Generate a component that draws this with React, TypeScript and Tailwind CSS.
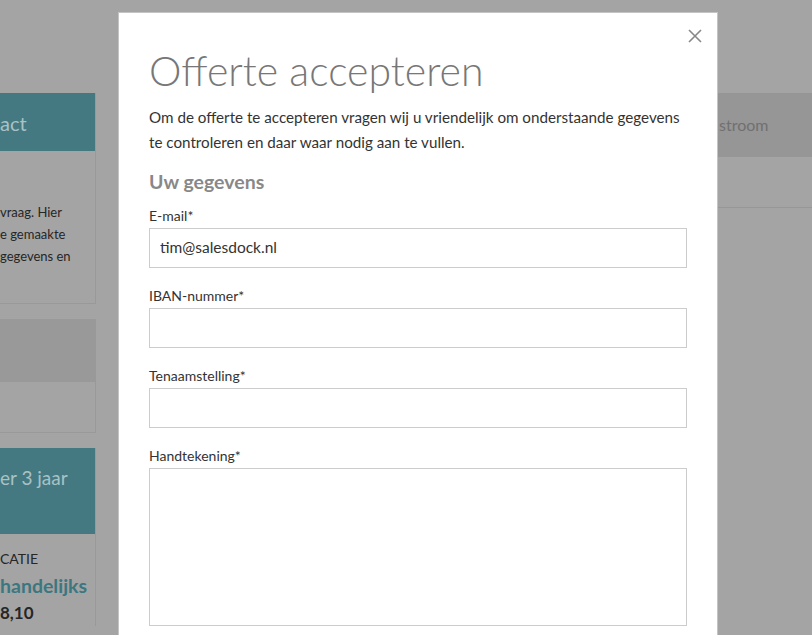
import React from "react";

const Field = ({ label, value, tall }: { label: string; value?: string; tall?: boolean }) => (
  <div className="flex flex-col">
    <label className="text-[14px] leading-[20px] text-[#333] mb-[2px]">{label}</label>
    <div
      className={`border border-[#cccccc] bg-white flex ${tall ? "h-[158px] items-start" : "h-[40px] items-center"} px-[10px]`}
    >
      {value ? <span className="text-[15.5px] text-[#333]">{value}</span> : null}
    </div>
  </div>
);

export default function App() {
  return (
    <div
      className="relative w-[812px] h-[635px] overflow-hidden bg-[#a4a4a4]"
      style={{ fontFamily: "Lato, 'Open Sans', sans-serif" }}
    >
      {/* Background page */}
      <div className="flex justify-between pt-[93px]">
        <div className="w-[96px] flex flex-col gap-[15px] whitespace-nowrap">
          <div className="border-r border-b border-[#999]">
            <div className="h-[58px] bg-[#447982] flex items-center pt-[2px] text-[20px] text-[#a9c2c5]">
              act
            </div>
            <div className="h-[152px] flex flex-col justify-end pb-[36px] text-[13px] leading-[22px] text-[#262626]">
              <span>vraag. Hier</span>
              <span>e gemaakte</span>
              <span>gegevens en</span>
            </div>
          </div>
          <div className="border-r border-b border-t border-[#999]">
            <div className="h-[62px] bg-[#999]" />
            <div className="h-[50px]" />
          </div>
          <div className="border-r border-[#999]">
            <div className="h-[86px] bg-[#447982] flex items-start pt-[16px] text-[19px] text-[#a9c2c5]">
              er 3 jaar
            </div>
            <div className="flex flex-col pt-[15px]">
              <span className="text-[14px] text-[#262626] leading-[20px]">CATIE</span>
              <span className="text-[19.5px] font-bold text-[#3c7780] leading-[28px] mt-[3px]">handelijks</span>
              <span className="text-[17px] font-bold text-[#262626] leading-[26px]">8,10</span>
            </div>
          </div>
        </div>
        <div className="w-[150px] mr-[-55px]">
          <div className="h-[64px] bg-[#969696] flex items-center text-[16px] text-[#707070] pl-[2px] pb-[1px]">
            stroom
          </div>
          <div className="h-[51px] border-b border-[#979797]" />
        </div>
      </div>

      {/* Modal */}
      <div className="absolute left-[118px] top-[12px] w-[600px] h-[640px] bg-white border border-[#c4c4c4] px-[30px] pt-[35px]">
        <button className="absolute right-[13px] top-[14px] w-[18px] h-[18px] flex items-center justify-center">
          <svg width="14" height="14" viewBox="0 0 14 14" stroke="#888" strokeWidth="1.6" fill="none">
            <path d="M1 1 L13 13 M13 1 L1 13" />
          </svg>
        </button>
        <h1 className="text-[41px] leading-[46px] font-light text-[#777]">Offerte accepteren</h1>
        <p className="mt-[11px] text-[15.2px] leading-[25px] text-[#333]">
          Om de offerte te accepteren vragen wij u vriendelijk om onderstaande gegevens te controleren en daar waar nodig aan te vullen.
        </p>
        <h2 className="mt-[14px] text-[19.5px] leading-[26px] font-bold text-[#888]">Uw gegevens</h2>
        <div className="mt-[11px] flex flex-col gap-[18px]">
          <Field label="E-mail*" value="tim@salesdock.nl" />
          <Field label="IBAN-nummer*" />
          <Field label="Tenaamstelling*" />
          <Field label="Handtekening*" tall />
        </div>
      </div>
    </div>
  );
}
